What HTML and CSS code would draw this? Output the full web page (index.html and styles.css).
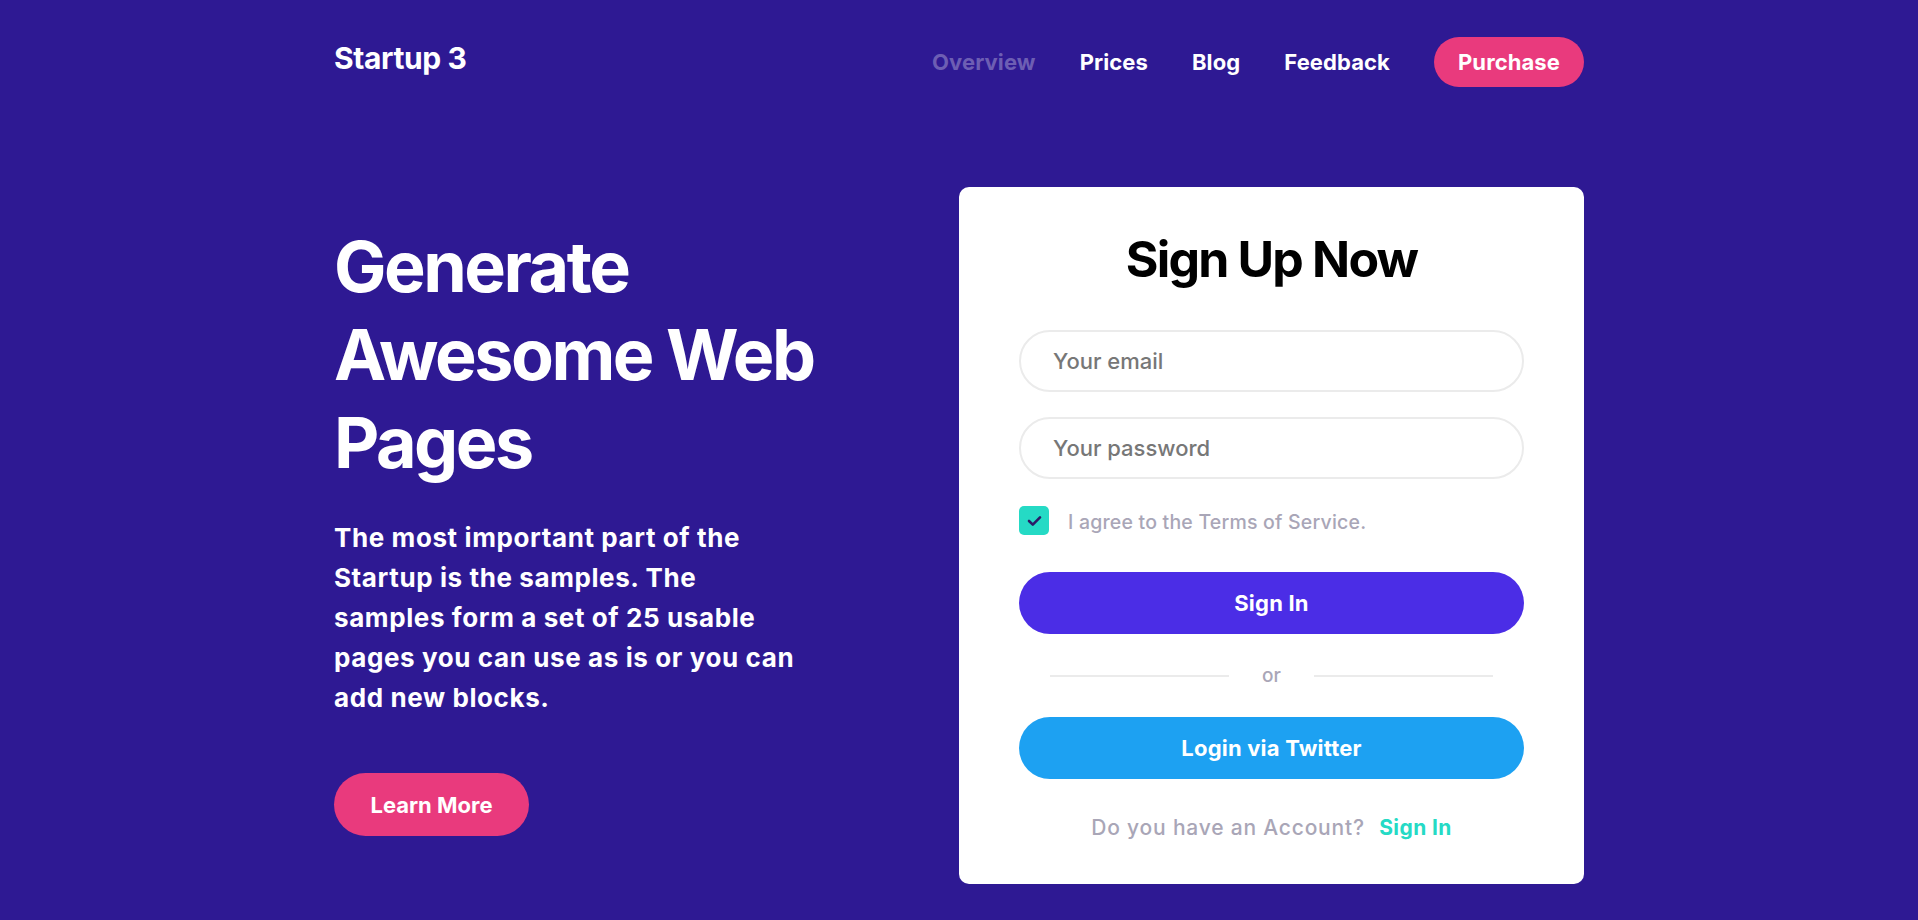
FILE: index.html
```html
<!DOCTYPE html>
<html lang="en">
<head>
<meta charset="utf-8">
<title>Startup 3</title>
<link rel="stylesheet" href="styles.css">
</head>
<body>
<div class="page">
  <header class="header">
    <a class="logo" href="#">Startup 3</a>
    <nav class="nav">
      <a class="nav-link nav-link-active" href="#">Overview</a>
      <a class="nav-link" href="#">Prices</a>
      <a class="nav-link" href="#">Blog</a>
      <a class="nav-link" href="#">Feedback</a>
      <a class="btn-purchase" href="#">Purchase</a>
    </nav>
  </header>
  <main class="hero">
    <section class="hero-text">
      <h1 class="hero-title">Generate Awesome Web Pages</h1>
      <p class="hero-lead">The most important part of the Startup is the samples. The samples form a set of 25 usable pages you can use as is or you can add new blocks.</p>
      <a class="btn-learn" href="#">Learn More</a>
    </section>
    <form class="card">
      <h2 class="card-title">Sign Up Now</h2>
      <input class="field" type="email" placeholder="Your email">
      <input class="field" type="password" placeholder="Your password">
      <label class="agree">
        <span class="checkbox"><svg width="15" height="12" viewBox="0 0 15 12"><path d="M2 6 L5.8 9.6 L13 2.4" fill="none" stroke="#2b1a66" stroke-width="2.6" stroke-linecap="round" stroke-linejoin="round"/></svg></span>
        <span class="agree-text">I agree to the Terms of Service.</span>
      </label>
      <button class="btn-wide btn-signin" type="button">Sign In</button>
      <div class="divider"><span class="divider-line"></span><span class="divider-text">or</span><span class="divider-line"></span></div>
      <button class="btn-wide btn-twitter" type="button">Login via Twitter</button>
      <p class="account">Do you have an Account? <a class="account-link" href="#">Sign In</a></p>
    </form>
  </main>
</div>
</body>
</html>
```

FILE: styles.css
```css
* { box-sizing: border-box; }
html, body { margin: 0; padding: 0; }
body {
  background: #2e1993;
  font-family: Inter, "DejaVu Sans", sans-serif;
  color: #fff;
  min-height: 920px;
}
a { text-decoration: none; }
.page {
  width: 1250px;
  margin: 0 auto;
}
.header {
  display: flex;
  justify-content: space-between;
  align-items: flex-start;
  padding-top: 37px;
}
.logo {
  color: #fff;
  font-weight: 700;
  font-size: 30px;
  line-height: 36px;
  letter-spacing: -0.4px;
  margin-top: 3px;
}
.nav {
  display: flex;
  align-items: center;
  gap: 44px;
}
.nav-link {
  color: #fff;
  font-weight: 700;
  font-size: 22px;
  letter-spacing: 0.1px;
}
.nav-link-active { color: #6d5eb3; }
.btn-purchase {
  display: flex;
  align-items: center;
  justify-content: center;
  width: 150px;
  height: 50px;
  border-radius: 25px;
  background: #e93a7d;
  color: #fff;
  font-weight: 700;
  font-size: 22px;
  letter-spacing: 0.1px;
}
.hero {
  display: flex;
  justify-content: space-between;
  align-items: flex-start;
  margin-top: 100px;
}
.hero-text {
  width: 520px;
  margin-top: 36px;
}
.hero-title {
  margin: 0;
  font-size: 70px;
  line-height: 88px;
  font-weight: 700;
  letter-spacing: -2.5px;
}
.hero-lead {
  margin: 31px 0 0;
  width: 470px;
  font-size: 26px;
  line-height: 40px;
  font-weight: 700;
  letter-spacing: 0.6px;
}
.btn-learn {
  display: flex;
  align-items: center;
  justify-content: center;
  width: 195px;
  height: 63px;
  margin-top: 55px;
  border-radius: 32px;
  background: #e93a7d;
  color: #fff;
  font-size: 22px;
  font-weight: 700;
}
.card {
  width: 625px;
  height: 697px;
  background: #fff;
  border-radius: 10px;
  padding: 40px 60px 0;
  display: flex;
  flex-direction: column;
}
.card-title {
  margin: 0;
  text-align: center;
  color: #000;
  font-size: 50px;
  line-height: 64px;
  font-weight: 700;
  letter-spacing: -1.8px;
}
.field {
  display: block;
  width: 100%;
  height: 62px;
  margin-top: 39px;
  border: 2px solid #ebebeb;
  border-radius: 31px;
  padding: 0 32px;
  font-family: Inter, "DejaVu Sans", sans-serif;
  font-size: 22px;
  font-weight: 500;
  color: #222;
  outline: none;
}
.field + .field { margin-top: 25px; }
.field::placeholder { color: #777; }
.agree {
  display: flex;
  align-items: center;
  gap: 19px;
  margin-top: 27px;
}
.checkbox {
  display: flex;
  align-items: center;
  justify-content: center;
  width: 30px;
  height: 29px;
  border-radius: 5px;
  background: #25dac5;
}
.agree-text {
  color: #a9a6b7;
  font-size: 19.5px;
  font-weight: 500;
  letter-spacing: 0.2px;
  line-height: 24px;
  padding-top: 3px;
}
.btn-wide {
  display: block;
  width: 100%;
  height: 62px;
  border: 0;
  border-radius: 31px;
  color: #fff;
  font-family: Inter, "DejaVu Sans", sans-serif;
  font-size: 22px;
  font-weight: 700;
  letter-spacing: 0.2px;
}
.btn-signin {
  background: #4b2de6;
  margin-top: 37px;
}
.divider {
  display: flex;
  align-items: center;
  justify-content: center;
  gap: 33px;
  height: 83px;
}
.divider-line {
  width: 179px;
  height: 2px;
  background: #ebebeb;
}
.divider-text {
  color: #a9a6b7;
  font-size: 19px;
  font-weight: 500;
}
.btn-twitter { background: #1da1f2; }
.account {
  margin: 36px 0 0;
  text-align: center;
  color: #a9a6b7;
  font-size: 21px;
  font-weight: 500;
  letter-spacing: 0.8px;
}
.account-link {
  color: #25dac5;
  font-weight: 700;
  margin-left: 8px;
  letter-spacing: 0.4px;
}
```
